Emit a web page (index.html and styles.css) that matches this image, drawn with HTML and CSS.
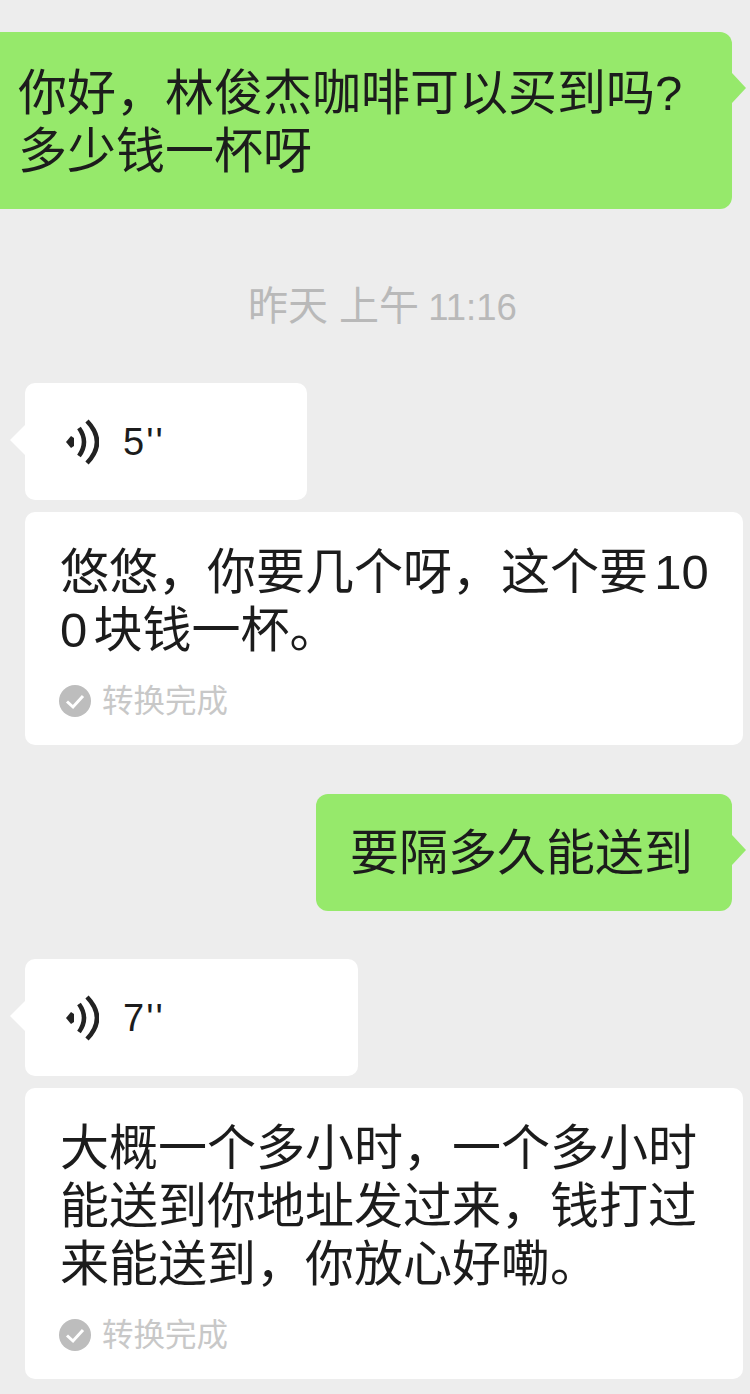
FILE: index.html
```html
<!DOCTYPE html>
<html lang="zh-CN">
<head>
  <meta charset="UTF-8">
  <title>聊天记录</title>
  <link rel="stylesheet" href="styles.css">
</head>
<body>

  <main class="chat">
    <div class="bubble sent first">你好，林俊杰咖啡可以买到吗?<br>多少钱一杯呀</div>

    <div class="time">昨天 上午<span class="clock">11:16</span></div>

    <div class="voice voice-short">
      <svg class="wave" viewBox="0 0 34 46"><path class="dot" d="M1 23l5-6 3 2v8l-3 2z"/><path d="M14 9q10 14 0 28"/><path d="M22 2q20 21 0 42"/></svg>
      <span>5''</span>
    </div>
    <div class="transcript">
      <p>悠悠，你要几个呀，这个要10<br>0块钱一杯。</p>
      <div class="status">
        <svg class="check" viewBox="0 0 32 32"><circle cx="16" cy="16" r="16" fill="#bdbdbd"/><path d="M8 16.5l6 5.5 10-11" fill="none" stroke="#fff" stroke-width="3"/></svg>
        <span>转换完成</span>
      </div>
    </div>

    <div class="bubble sent second">要隔多久能送到</div>

    <div class="voice voice-long">
      <svg class="wave" viewBox="0 0 34 46"><path class="dot" d="M1 23l5-6 3 2v8l-3 2z"/><path d="M14 9q10 14 0 28"/><path d="M22 2q20 21 0 42"/></svg>
      <span>7''</span>
    </div>
    <div class="transcript">
      <p>大概一个多小时，一个多小时<br>能送到你地址发过来，钱打过<br>来能送到，你放心好嘞。</p>
      <div class="status">
        <svg class="check" viewBox="0 0 32 32"><circle cx="16" cy="16" r="16" fill="#bdbdbd"/><path d="M8 16.5l6 5.5 10-11" fill="none" stroke="#fff" stroke-width="3"/></svg>
        <span>转换完成</span>
      </div>
    </div>
  </main>

</body>
</html>
```
FILE: styles.css
```css
html, body {
  margin: 0;
  padding: 0;
}

body {
  background: #ededed;
  color: #1c1c1c;
  font-family: "Liberation Sans", "Noto Sans CJK SC", sans-serif;
  font-size: 49px;
  line-height: 58px;
  overflow: hidden;
}

.chat {
  display: flex;
  flex-direction: column;
  height: 1394px;
  box-sizing: border-box;
  padding-top: 32px;
}

.bubble {
  position: relative;
  align-self: flex-start;
  box-sizing: border-box;
  background: #96e96b;
  border-radius: 12px;
  white-space: nowrap;
}

.bubble::after {
  content: "";
  position: absolute;
  top: 41px;
  right: -14px;
  width: 0;
  height: 0;
  border-left: 14px solid #96e96b;
  border-top: 15px solid transparent;
  border-bottom: 15px solid transparent;
}

.sent.first {
  width: 732px;
  height: 177px;
  padding: 32px 0 0 18px;
  border-radius: 0 12px 12px 0;
}

.sent.second {
  margin: 49px 0 0 316px;
  width: 416px;
  height: 117px;
  padding: 30px 0 0 34px;
}

.time {
  margin-top: 73px;
  height: 49px;
  padding-left: 248px;
  color: #b9b9b9;
  font-size: 40px;
  line-height: 49px;
}

.clock {
  margin-left: 9px;
  font-size: 36.5px;
}

.voice {
  position: relative;
  display: flex;
  align-items: center;
  gap: 24px;
  box-sizing: border-box;
  height: 117px;
  margin-left: 25px;
  padding-left: 40px;
  background: #fff;
  border-radius: 10px;
  font-size: 38px;
  letter-spacing: 2px;
}

.voice::before {
  content: "";
  position: absolute;
  top: 42px;
  left: -15px;
  width: 0;
  height: 0;
  border-right: 15px solid #fff;
  border-top: 15px solid transparent;
  border-bottom: 15px solid transparent;
}

.voice-short {
  width: 282px;
  margin-top: 52px;
}

.voice-long {
  width: 333px;
  margin-top: 48px;
}

.wave {
  width: 34px;
  height: 46px;
  flex: none;
}

.wave path {
  fill: none;
  stroke: #222;
  stroke-width: 4.5;
}

.wave .dot {
  fill: #222;
  stroke: none;
}

.transcript {
  box-sizing: border-box;
  width: 718px;
  margin: 12px 0 0 25px;
  padding: 31px 0 21px 35px;
  background: #fff;
  border-radius: 10px;
  text-autospace: normal;
}

.transcript p {
  margin: 0;
  white-space: nowrap;
}

.status {
  display: flex;
  align-items: center;
  gap: 11px;
  margin-top: 19px;
  margin-left: -1px;
  color: #c8c8c8;
  font-size: 31.5px;
  line-height: 46px;
}

.check {
  width: 32px;
  height: 32px;
  flex: none;
}
```
